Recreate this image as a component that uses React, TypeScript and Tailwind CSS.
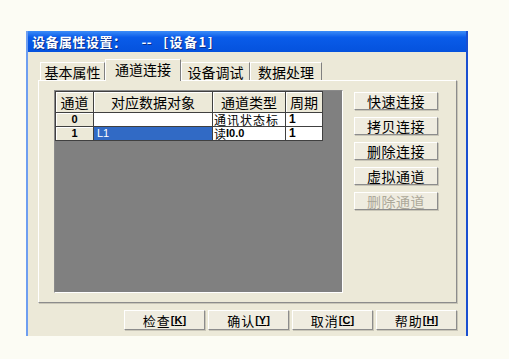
import React from "react";

const cjk = "font-['Noto_Sans_CJK_SC','Liberation_Sans',sans-serif]";
const lat = "font-['Liberation_Sans',Arial,sans-serif]";

function Tab({ label, w, selected }: { label: string; w: string; selected?: boolean }) {
  if (selected) {
    return (
      <div
        className={`${w} h-[22px] -mb-[1px] relative z-10 bg-[#ece9d8] border-t border-l border-r border-t-white border-l-white border-r-[#808080] flex items-center justify-center text-[14px] text-black leading-none pb-[3px]`}
      >
        {label}
      </div>
    );
  }
  return (
    <div
      className={`${w} h-[18px] bg-[#ece9d8] border-t border-l border-r border-t-white border-l-white border-r-[#808080] flex items-center justify-center text-[14px] text-black leading-none`}
    >
      {label}
    </div>
  );
}

function SideButton({ label, disabled }: { label: string; disabled?: boolean }) {
  return (
    <div
      className={`w-[84px] h-[18px] bg-[#efece0] border border-t-white border-l-white border-r-[#8c8c8c] border-b-[#8c8c8c] shadow-[1px_1px_0_#c9c6b8] flex items-center justify-center text-[14px] tracking-[0.5px] leading-none ${
        disabled ? "text-[#aca899]" : "text-black"
      }`}
    >
      {label}
    </div>
  );
}

function BottomButton({ label, hot }: { label: string; hot: string }) {
  return (
    <div className="w-[81px] h-[20px] bg-[#efece0] border border-t-white border-l-white border-r-[#8c8c8c] border-b-[#8c8c8c] shadow-[1px_1px_0_#c9c6b8] flex items-center justify-center text-[13px] leading-none text-black">
      <span className="tracking-[1px]">{label}</span>
      <span className={`${lat} font-bold text-[11px]`}>
        [<span className="underline">{hot}</span>]
      </span>
    </div>
  );
}

export default function App() {
  const headCell =
    "h-[21px] bg-[#ece9d8] border-r border-b border-r-[#404040] border-b-[#404040] shadow-[inset_1px_1px_0_#ffffff] flex items-center justify-center text-[14px] leading-none text-black";
  const rowHead =
    `h-[14px] bg-[#ece9d8] border-r border-b border-r-[#404040] border-b-[#404040] shadow-[inset_1px_1px_0_#ffffff] flex items-center justify-center ${lat} font-bold text-[11px] leading-none text-black`;
  const cell =
    "h-[14px] bg-white border-r border-b border-r-[#404040] border-b-[#404040] flex items-center overflow-hidden whitespace-nowrap text-[12px] leading-[13px] text-black";

  return (
    <div className={`w-[509px] h-[359px] bg-[#fcfcf4] pt-[31px] pl-[26px] ${cjk}`}>
      <div className="w-[442px] h-[305px] flex flex-col bg-[#ece9d8] border-l-2 border-r-2 border-l-[#6e9ef0] border-r-[#1a4fd0]">
        {/* title bar */}
        <div className="h-[21px] bg-linear-to-b from-[#3b8cf8] via-[#0a5ce9] via-30% to-[#0552dd] flex items-center pl-[4px] text-white font-bold text-[13px] leading-none tracking-[0.5px] [text-shadow:1px_1px_0_#0a2e8a]">
          <span>设备属性设置：</span>
          <span className="ml-[15px]">--</span>
          <span className="ml-[11px] tracking-[1.5px]">[设备1]</span>
        </div>

        {/* body */}
        <div className="flex-1 flex flex-col pl-[10px] pr-[9px] pt-[7px]">
          {/* tabs */}
          <div className="h-[21px] flex items-end pl-[2px]">
            <Tab label="基本属性" w="w-[65px]" />
            <Tab label="通道连接" w="w-[76px]" selected />
            <Tab label="设备调试" w="w-[69px]" />
            <Tab label="数据处理" w="w-[72px]" />
          </div>

          {/* panel */}
          <div className="h-[223px] flex pl-[15px] pt-[9px] border border-t-white border-l-white border-r-[#8c8c8c] border-b-[#8c8c8c] shadow-[1px_1px_0_#c9c6b8]">
            {/* grid */}
            <div className="w-[289px] h-[203px] bg-[#808080] border border-t-[#8a8a8a] border-l-[#8a8a8a] border-r-white border-b-white">
              <div className="flex flex-col w-[268px] border-t border-l border-[#404040]">
                <div className="grid grid-cols-[38px_119px_73px_37px]">
                  <div className={headCell}>通道</div>
                  <div className={headCell}>对应数据对象</div>
                  <div className={headCell}>通道类型</div>
                  <div className={headCell}>周期</div>
                </div>
                <div className="grid grid-cols-[38px_119px_73px_37px]">
                  <div className={rowHead}>0</div>
                  <div className={cell}></div>
                  <div className={`${cell} pl-[1px] tracking-[1px]`}>通讯状态标</div>
                  <div className={`${cell} pl-[3px] ${lat} font-bold text-[11px]`}>1</div>
                </div>
                <div className="grid grid-cols-[38px_119px_73px_37px]">
                  <div className={rowHead}>1</div>
                  <div className={`${cell} !bg-[#316ac5] text-white pl-[3px]`}>
                    <span className={`${lat} text-[11px] text-white`}>L1</span>
                  </div>
                  <div className={`${cell} pl-[1px]`}>
                    读<span className={`${lat} font-bold text-[11px]`}>I0.0</span>
                  </div>
                  <div className={`${cell} pl-[3px] ${lat} font-bold text-[11px]`}>1</div>
                </div>
              </div>
            </div>

            {/* side buttons */}
            <div className="ml-[11px] pt-[2px] flex flex-col gap-[7px]">
              <SideButton label="快速连接" />
              <SideButton label="拷贝连接" />
              <SideButton label="删除连接" />
              <SideButton label="虚拟通道" />
              <SideButton label="删除通道" disabled />
            </div>
          </div>

          {/* bottom buttons */}
          <div className="mt-[7px] flex justify-end gap-[3px]">
            <BottomButton label="检查" hot="K" />
            <BottomButton label="确认" hot="Y" />
            <BottomButton label="取消" hot="C" />
            <BottomButton label="帮助" hot="H" />
          </div>
        </div>
      </div>
    </div>
  );
}
